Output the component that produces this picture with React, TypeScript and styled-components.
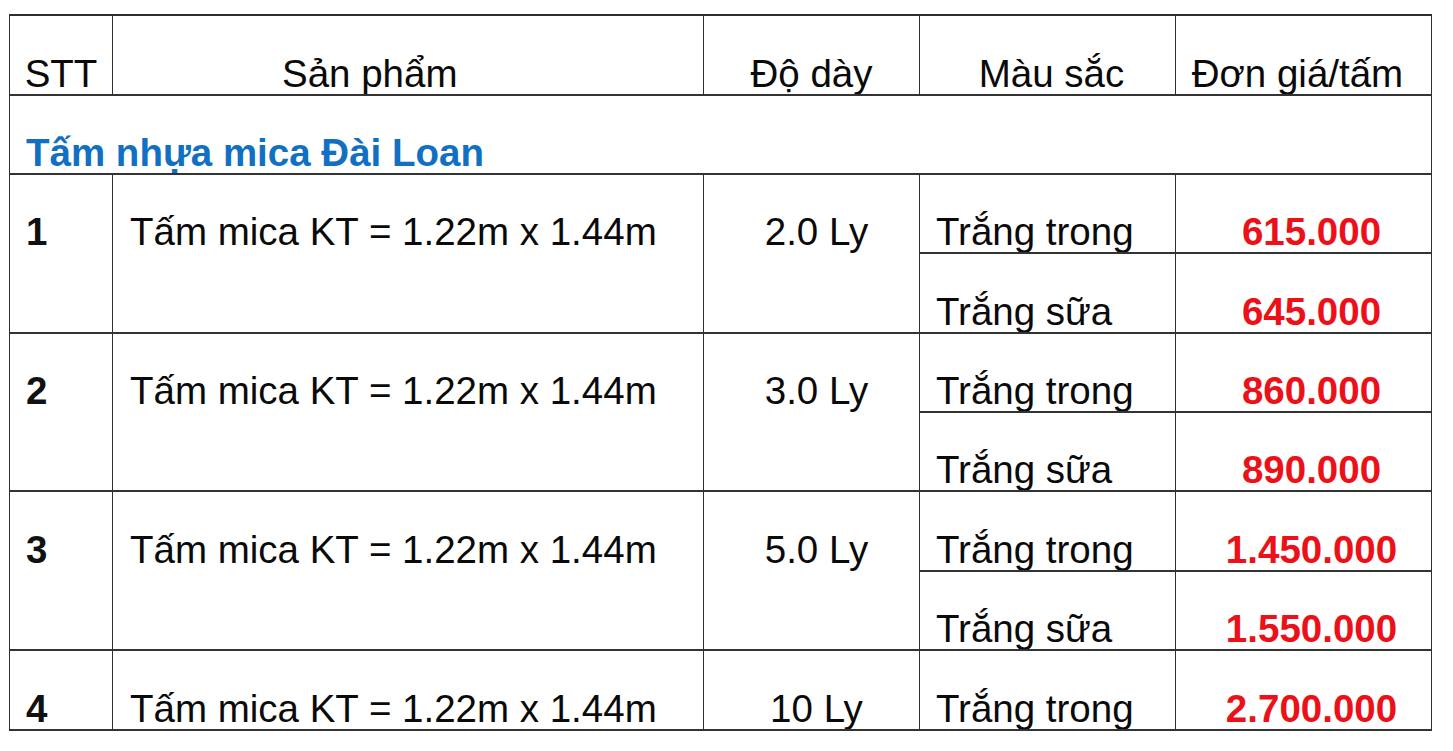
import React from "react";
import styled, { createGlobalStyle, css } from "styled-components";

const GlobalStyle = createGlobalStyle`
  html, body { margin: 0; padding: 0; background: #ffffff; }
  body { font-family: "Liberation Sans", Arial, sans-serif; }
`;

const Page = styled.div`
  padding: 14px 0 0 9px;
  background: #ffffff;
`;

const Table = styled.div`
  display: grid;
  grid-template-columns: 103px 591px 216px 256px 256px;
  grid-template-rows: 79.5px repeat(8, 79.4px);
  width: max-content;
  border-top: 2px solid #2e2e2e;
  border-left: 1.5px solid #2e2e2e;
  box-sizing: border-box;
`;

type Align = "left" | "center";

const Cell = styled.div<{
  $align?: Align;
  $pl?: number;
  $pr?: number;
  $span?: number;
  $full?: boolean;
}>`
  box-sizing: border-box;
  display: flex;
  align-items: flex-end;
  justify-content: ${(p) => (p.$align === "center" ? "center" : "flex-start")};
  padding-left: ${(p) => p.$pl ?? 0}px;
  padding-right: ${(p) => p.$pr ?? 0}px;
  border-right: 1.5px solid #2e2e2e;
  border-bottom: 2px solid #333333;
  font-size: 38.5px;
  line-height: 40px;
  color: #0a0a0a;
  white-space: nowrap;
  overflow: hidden;
  ${(p) =>
    p.$span === 2 &&
    css`
      grid-row: span 2;
      padding-bottom: 79.4px;
    `}
  ${(p) =>
    p.$full &&
    css`
      grid-column: 1 / -1;
    `}
`;

const Num = styled.span`
  font-weight: 700;
  color: #111111;
`;

const Section = styled.span`
  font-weight: 700;
  color: #1170c2;
  font-size: 38.5px;
`;

const Price = styled.span`
  font-weight: 700;
  color: #ec1118;
`;

type Item = {
  no: string;
  product: string;
  thick: string;
  variants: { color: string; price: string }[];
};

const items: Item[] = [
  {
    no: "1",
    product: "Tấm mica KT = 1.22m x 1.44m",
    thick: "2.0 Ly",
    variants: [
      { color: "Trắng trong", price: "615.000" },
      { color: "Trắng sữa", price: "645.000" },
    ],
  },
  {
    no: "2",
    product: "Tấm mica KT = 1.22m x 1.44m",
    thick: "3.0 Ly",
    variants: [
      { color: "Trắng trong", price: "860.000" },
      { color: "Trắng sữa", price: "890.000" },
    ],
  },
  {
    no: "3",
    product: "Tấm mica KT = 1.22m x 1.44m",
    thick: "5.0 Ly",
    variants: [
      { color: "Trắng trong", price: "1.450.000" },
      { color: "Trắng sữa", price: "1.550.000" },
    ],
  },
  {
    no: "4",
    product: "Tấm mica KT = 1.22m x 1.44m",
    thick: "10 Ly",
    variants: [{ color: "Trắng trong", price: "2.700.000" }],
  },
];

export default function App() {
  return (
    <Page>
      <GlobalStyle />
      <Table>
        <Cell $align="center">STT</Cell>
        <Cell $pl={169}>Sản phẩm</Cell>
        <Cell $align="center">Độ dày</Cell>
        <Cell $align="center" $pl={8}>Màu sắc</Cell>
        <Cell $align="center" $pr={12}>Đơn giá/tấm</Cell>

        <Cell $full $pl={16}>
          <Section>Tấm nhựa mica Đài Loan</Section>
        </Cell>

        {items.map((it) => {
          const span = it.variants.length;
          return (
            <React.Fragment key={it.no}>
              <Cell $span={span} $pl={16}>
                <Num>{it.no}</Num>
              </Cell>
              <Cell $span={span} $pl={17}>
                {it.product}
              </Cell>
              <Cell $span={span} $align="center" $pl={10}>
                {it.thick}
              </Cell>
              {it.variants.map((v, i) => (
                <React.Fragment key={i}>
                  <Cell $pl={16}>{v.color}</Cell>
                  <Cell $align="center" $pl={16}>
                    <Price>{v.price}</Price>
                  </Cell>
                </React.Fragment>
              ))}
            </React.Fragment>
          );
        })}
      </Table>
    </Page>
  );
}
